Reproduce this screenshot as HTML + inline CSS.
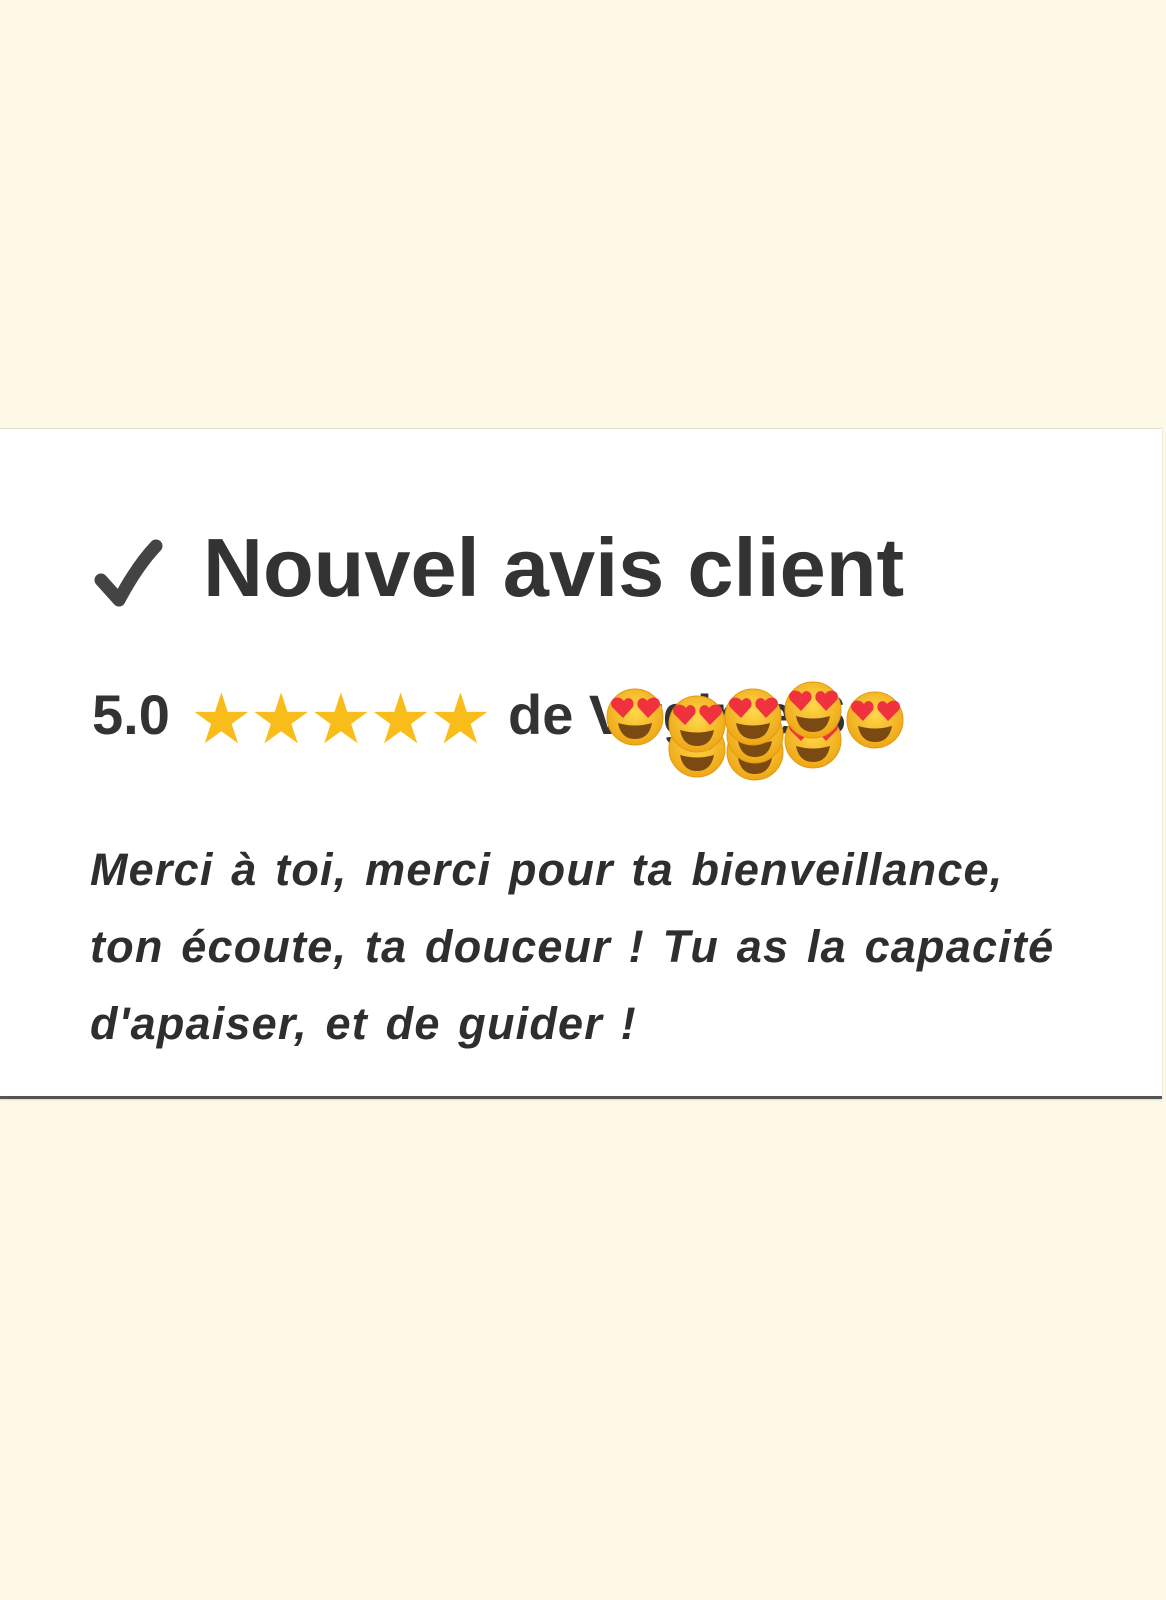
<!DOCTYPE html>
<html><head><meta charset="utf-8"><style>
html,body{margin:0;padding:0;}
body{width:1166px;height:1600px;background:#fef9e7;position:relative;overflow:hidden;font-family:"Liberation Sans",Arial,sans-serif;color:#333;}
.card{position:absolute;left:0;top:428px;width:1162px;height:667px;background:#fff;border-top:1px solid #e4e0d2;border-bottom:3px solid #555;box-shadow:0 1px 2px rgba(0,0,0,.15);}
.title{position:absolute;left:92px;top:518px;font-size:83px;font-weight:bold;line-height:100px;white-space:nowrap;}
.title svg{position:absolute;left:0;top:20px;}
.title span{position:absolute;left:111px;top:0;}
.rate{position:absolute;left:92px;top:685px;font-size:56px;font-weight:bold;line-height:60px;white-space:nowrap;}
.stars{position:absolute;left:98px;top:4px;color:#f8bd1a;font-family:"DejaVu Sans",sans-serif;font-size:70px;letter-spacing:-3px;}
.de{position:absolute;left:416px;top:0;}
.body{position:absolute;left:90px;top:831px;font-size:45px;font-weight:bold;font-style:italic;line-height:77px;white-space:nowrap;color:#2e2e2e;letter-spacing:1.2px;word-spacing:4px;}
</style></head><body>
<div class="card"></div>
<div class="title"><svg width="72" height="72" viewBox="0 0 72 72"><path d="M9 42 L27 62 Q45 28 64 8" fill="none" stroke="#444" stroke-width="13" stroke-linecap="round" stroke-linejoin="round"/></svg><span>Nouvel avis client</span></div>
<div class="rate"><span>5.0</span><span class="stars">★★★★★</span><span class="de">de Virginie S</span></div>
<svg style="position:absolute;left:0;top:0" width="1166" height="1600">
<defs>
<radialGradient id="g" cx="50%" cy="40%" r="60%"><stop offset="0" stop-color="#ffd84a"/><stop offset="1" stop-color="#eea616"/></radialGradient>
<g id="f">
<circle r="28" fill="url(#g)" stroke="#e39a10" stroke-width="1"/>
<path d="M-11 -16 c-6 -7 -16 -2 -12 6 l11 11 l10 -11 c3 -8 -6 -12 -9 -6z" fill="#f0313e"/>
<path d="M12 -16 c-3 -6 -12 -2 -9 6 l10 11 l11 -11 c4 -8 -6 -13 -12 -6z" fill="#f0313e"/>
<path d="M-17 6 Q0 11 17 6 Q14 22 0 22 Q-14 22 -17 6z" fill="#7a4a12"/>
</g>
</defs>
<use href="#f" x="697" y="749"/><use href="#f" x="697" y="724"/>
<use href="#f" x="635" y="717"/>
<use href="#f" x="755" y="752"/><use href="#f" x="755" y="735"/><use href="#f" x="753" y="717"/>
<use href="#f" x="813" y="740"/><use href="#f" x="813" y="710"/>
<use href="#f" x="875" y="720"/>
</svg>
<div class="body">Merci à toi, merci pour ta bienveillance,<br>ton écoute, ta douceur ! Tu as la capacité<br>d'apaiser, et de guider !</div>
</body></html>
